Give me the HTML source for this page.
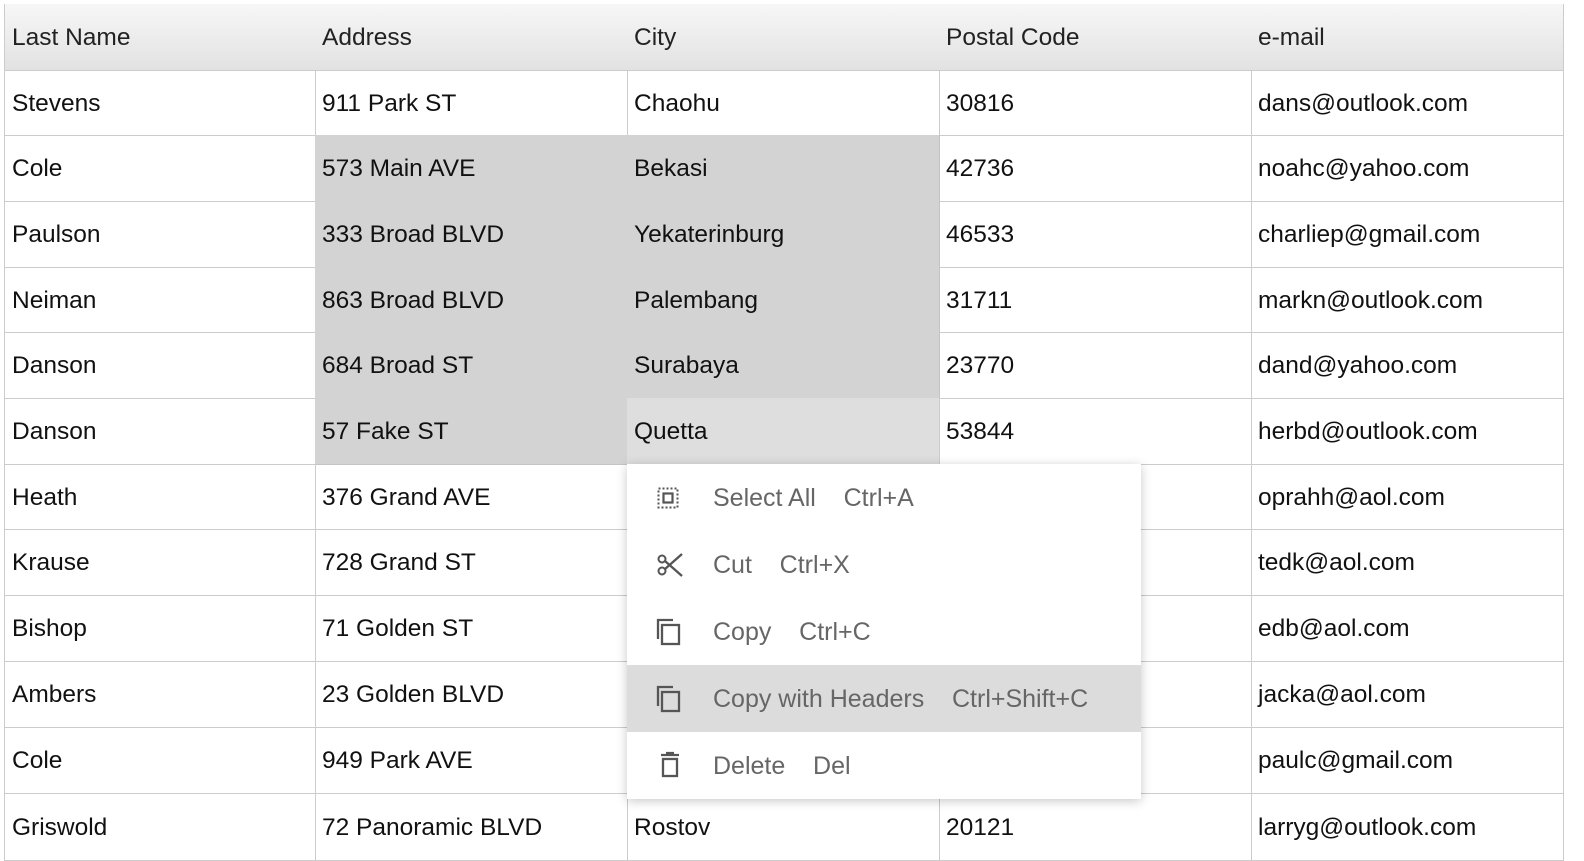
<!DOCTYPE html>
<html><head><meta charset="utf-8"><style>
body{margin:0;width:1584px;height:860px;overflow:hidden;background:#fff;font-family:"Liberation Sans",sans-serif;position:relative}
.c{position:absolute;box-sizing:border-box;border-right:1px solid #cccccc;border-bottom:1px solid #cccccc;font-size:24.5px;color:#111;padding-left:7px;padding-top:2px;display:flex;align-items:center}
.h{background:linear-gradient(#f7f7f7,#e2e2e2);color:#222}
.s{background:#d3d3d3;border-color:#c4c4c4}.q{background:#dedede}
#menu{position:absolute;left:627px;top:464px;width:514px;height:335px;background:#fff;box-shadow:0 2px 10px rgba(0,0,0,.22)}
.mi{position:absolute;left:0;width:514px;height:67px;display:flex;align-items:center;font-size:25px;color:#666}
.mi svg{position:absolute;left:28px}
.mi .t{position:absolute;left:86px;padding-top:2px}
</style></head><body>
<div id="g"></div>
<div id="menu">
<div class="mi" style="top:0"><svg width="26" height="26" viewBox="0 0 26 26"><rect x="3.5" y="3.5" width="19" height="19" fill="none" stroke="#555" stroke-width="2" stroke-dasharray="2 2"/><rect x="8.5" y="8.5" width="9" height="9" fill="none" stroke="#555" stroke-width="2.2"/></svg><span class="t">Select All&nbsp;&nbsp;&nbsp; Ctrl+A</span></div>
<div class="mi" style="top:67px"><svg width="30" height="30" viewBox="0 0 30 30"><circle cx="7" cy="9" r="3.5" fill="none" stroke="#555" stroke-width="2"/><circle cx="7" cy="21" r="3.5" fill="none" stroke="#555" stroke-width="2"/><path d="M10 11 L27 26 M10 19 L27 4" stroke="#555" stroke-width="2.3" fill="none"/></svg><span class="t">Cut&nbsp;&nbsp;&nbsp; Ctrl+X</span></div>
<div class="mi" style="top:134px"><svg width="30" height="30" viewBox="0 0 30 30"><path d="M3 22 V3 H18" stroke="#555" stroke-width="2.3" fill="none"/><rect x="7" y="8" width="17" height="19" fill="none" stroke="#555" stroke-width="2.3"/></svg><span class="t">Copy&nbsp;&nbsp;&nbsp; Ctrl+C</span></div>
<div class="mi" style="top:201px;background:#dcdcdc"><svg width="30" height="30" viewBox="0 0 30 30"><path d="M3 22 V3 H18" stroke="#555" stroke-width="2.3" fill="none"/><rect x="7" y="8" width="17" height="19" fill="none" stroke="#555" stroke-width="2.3"/></svg><span class="t">Copy with Headers&nbsp;&nbsp;&nbsp; Ctrl+Shift+C</span></div>
<div class="mi" style="top:268px"><svg width="30" height="30" viewBox="0 0 30 30"><path d="M6 4 H24 M11 2 H19" stroke="#555" stroke-width="2.3"/><rect x="8" y="8" width="14" height="17" fill="none" stroke="#555" stroke-width="2.3"/></svg><span class="t">Delete&nbsp;&nbsp;&nbsp; Del</span></div>
</div>
<script>
var data=[["Last Name","Address","City","Postal Code","e-mail"],
["Stevens","911 Park ST","Chaohu","30816","dans@outlook.com"],
["Cole","573 Main AVE","Bekasi","42736","noahc@yahoo.com"],
["Paulson","333 Broad BLVD","Yekaterinburg","46533","charliep@gmail.com"],
["Neiman","863 Broad BLVD","Palembang","31711","markn@outlook.com"],
["Danson","684 Broad ST","Surabaya","23770","dand@yahoo.com"],
["Danson","57 Fake ST","Quetta","53844","herbd@outlook.com"],
["Heath","376 Grand AVE","","","oprahh@aol.com"],
["Krause","728 Grand ST","","","tedk@aol.com"],
["Bishop","71 Golden ST","","","edb@aol.com"],
["Ambers","23 Golden BLVD","","","jacka@aol.com"],
["Cole","949 Park AVE","","","paulc@gmail.com"],
["Griswold","72 Panoramic BLVD","Rostov","20121","larryg@outlook.com"]];
var ys=[4,70,135,201,267,332,398,464,529,595,661,727,793,860];
var xs=[4,315,627,939,1251,1563];var h="";
for(var r=0;r<13;r++)for(var c=0;c<5;c++){
var cls="c";if(r==0)cls+=" h";
if(c==1&&r>=2&&r<=6)cls+=" s";if(c==2&&r>=2&&r<=5)cls+=" s";if(c==2&&r==6)cls+=" q";
var st="left:"+xs[c]+"px;top:"+ys[r]+"px;width:"+(xs[c+1]-xs[c]+1)+"px;height:"+(ys[r+1]-ys[r]+1)+"px;";
if(c==0)st+="border-left:1px solid #cccccc;";
h+='<div class="'+cls+'" style="'+st+'">'+data[r][c]+'</div>';}
document.getElementById("g").innerHTML=h;
</script>
</body></html>
